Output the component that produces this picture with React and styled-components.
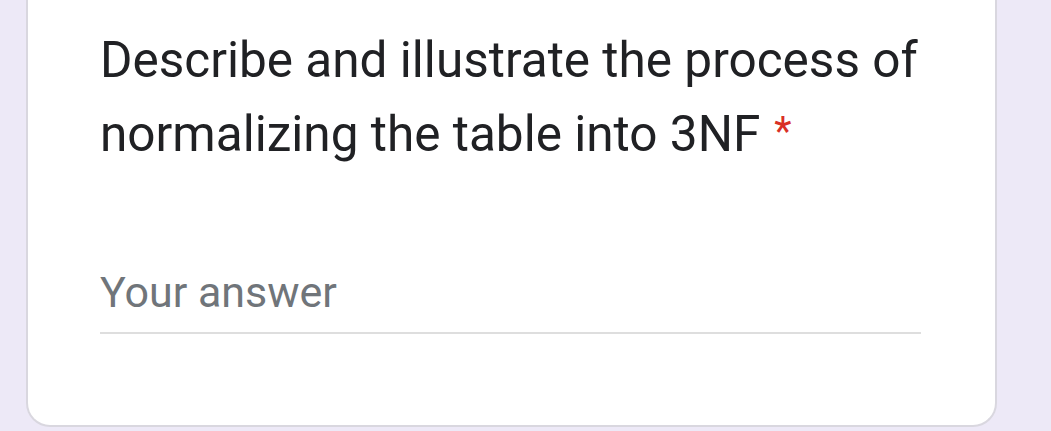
import React from 'react';
import styled, { createGlobalStyle } from 'styled-components';

const GlobalStyle = createGlobalStyle`
  html, body {
    margin: 0;
    padding: 0;
    background: #ede9f7;
    height: 100%;
    overflow: hidden;
  }
`;

function App() {
  return (
    <Page>
      <GlobalStyle />
      <Card>
        <Question>
          Describe and illustrate the process of normalizing the table into 3NF
          <Required>*</Required>
        </Question>
        <AnswerField>
          <AnswerInput placeholder="Your answer" />
        </AnswerField>
      </Card>
    </Page>
  );
}

export default App;

const Page = styled.div`
  height: 431px;
  box-sizing: border-box;
  padding: 0 54px 4px 26px;
  display: flex;
  flex-direction: column;
`;

const Card = styled.div`
  flex: 1;
  background: #ffffff;
  border: 2px solid #d9d7df;
  border-top: none;
  border-radius: 0 0 24px 24px;
  padding: 24px 74px 0 72px;
`;

const Question = styled.div`
  font-family: Roboto, "Noto Sans", sans-serif;
  font-size: 49.5px;
  line-height: 72px;
  color: #202124;
`;

const Required = styled.span`
  color: #d93025;
  font-size: 40px;
  margin-left: 14px;
  vertical-align: 6px;
`;

const AnswerField = styled.div`
  margin-top: 98px;
  border-bottom: 2px solid #dedede;
  padding-bottom: 16px;
`;

const AnswerInput = styled.input`
  display: block;
  border: none;
  outline: none;
  width: 100%;
  height: 48px;
  padding: 0;
  font-family: Roboto, "Liberation Sans", sans-serif;
  font-size: 43px;
  line-height: 48px;
  color: #202124;
  background: transparent;
  &::placeholder {
    color: #70757a;
  }
`;
